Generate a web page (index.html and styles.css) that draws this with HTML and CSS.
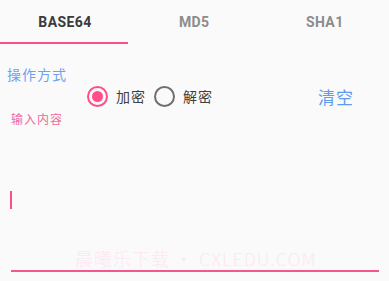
FILE: index.html
```html
<!DOCTYPE html>
<html lang="zh">
<head>
<meta charset="utf-8">
<link rel="stylesheet" href="styles.css">
</head>
<body>
<div class="page">
  <div class="tabs">
    <div class="tab active">BASE64</div>
    <div class="tab">MD5</div>
    <div class="tab">SHA1</div>
  </div>
  <div class="label-op">操作方式</div>
  <div class="ops-row">
    <span class="radio checked"></span><span class="radio-text">加密</span>
    <span class="radio"></span><span class="radio-text">解密</span>
    <span class="clear">清空</span>
  </div>
  <div class="label-input">输入内容</div>
  <div class="field"><span class="cursor"></span></div>
  <div class="watermark">晨曦乐下载 • CXLEDU.COM</div>
</div>
</body>
</html>
```
FILE: styles.css
```css
html, body {
  margin: 0;
  padding: 0;
  background: #fafafa;
}
.page {
  position: relative;
  width: 389px;
  height: 281px;
  overflow: hidden;
  font-family: Roboto, "Noto Sans CJK SC", sans-serif;
}
.tabs {
  display: grid;
  grid-template-columns: 128px 1fr 1fr;
  height: 44px;
}
.tab {
  display: flex;
  align-items: center;
  justify-content: center;
  font-size: 14px;
  font-weight: 700;
  letter-spacing: 0.4px;
  color: #8c8c8c;
  box-sizing: border-box;
  padding-bottom: 1px;
  padding-left: 2px;
}
.tab.active {
  color: #3a3a3a;
  border-bottom: 2px solid #ff4f8a;
  padding-top: 1px;
  padding-bottom: 0;
}
.label-op {
  margin: 22px 0 0 7px;
  font-family: "Noto Sans CJK SC", sans-serif;
  font-size: 14px;
  line-height: 16px;
  color: #6ea2ef;
  letter-spacing: 1px;
}
.ops-row {
  display: flex;
  align-items: center;
  height: 28px;
  padding-left: 87px;
  padding-right: 35px;
  font-family: "Noto Sans CJK SC", sans-serif;
}
.radio {
  box-sizing: border-box;
  width: 21px;
  height: 21px;
  border-radius: 50%;
  border: 2px solid #6f6f6f;
  display: flex;
  align-items: center;
  justify-content: center;
}
.radio.checked {
  border-color: #ff4f8a;
}
.radio.checked::after {
  content: "";
  width: 11px;
  height: 11px;
  border-radius: 50%;
  background: #ff4f8a;
}
.radio-text {
  font-size: 14px;
  color: #3f3f3f;
  margin-left: 8px;
  margin-right: 8px;
  letter-spacing: 1px;
}
.clear {
  margin-left: auto;
  font-size: 17px;
  color: #5f9bec;
  letter-spacing: 1px;
}
.label-input {
  margin: 2px 0 0 11px;
  font-family: "Noto Sans CJK SC", sans-serif;
  font-size: 12px;
  line-height: 14px;
  color: #f06a9c;
  letter-spacing: 1px;
}
.field {
  margin: 0 10px 0 11px;
  height: 144px;
  border-bottom: 2px solid #f2578f;
  display: flex;
  flex-direction: column;
}
.cursor {
  display: block;
  width: 2px;
  height: 18px;
  margin-top: 65px;
  margin-left: -1px;
  background: #ff4f8a;
}
.watermark {
  position: absolute;
  left: 75px;
  top: 247px;
  font-family: "Noto Sans CJK SC", sans-serif;
  font-size: 18px;
  font-weight: 300;
  line-height: 22px;
  letter-spacing: 1px;
  color: #fce8f1;
  white-space: nowrap;
}
```
